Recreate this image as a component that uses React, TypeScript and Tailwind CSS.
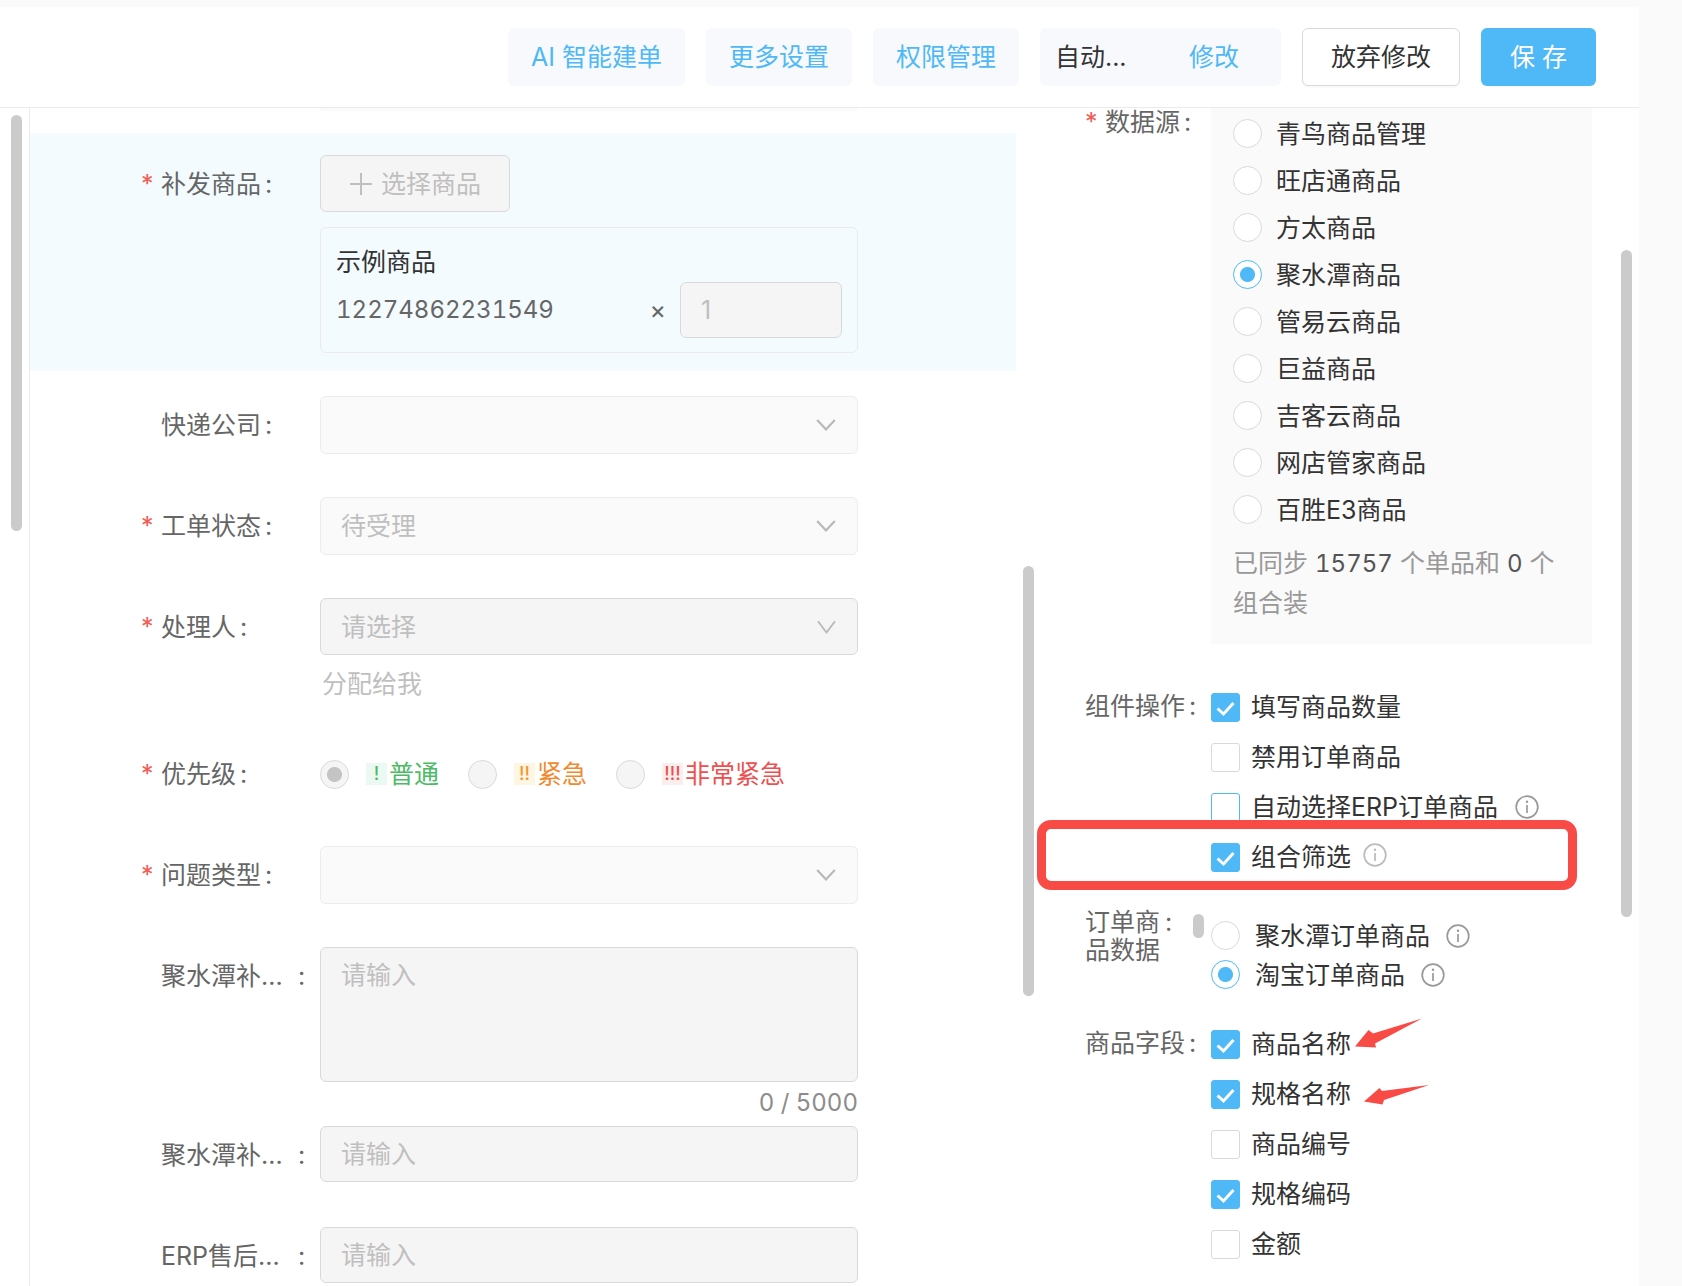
import { useState } from 'react'
import type { ReactNode } from 'react'

const sources = [
  '青鸟商品管理',
  '旺店通商品',
  '方太商品',
  '聚水潭商品',
  '管易云商品',
  '巨益商品',
  '吉客云商品',
  '网店管家商品',
  '百胜E3商品',
]

const headerLink = 'h-[58px] cursor-pointer rounded-md bg-[#f7f9fd] px-[23px] text-[#4fb8f6]'
const fieldBox = 'w-full rounded-md border border-[#d9d9d9] bg-[#f5f5f5] px-5 text-[#bfbfbf] placeholder:text-[#bfbfbf]'

const Thumb = ({ className }: { className: string }) => (
  <div className={`w-[11px] shrink-0 rounded-full bg-[#cbcbcb] ${className}`}></div>
)

const InfoIcon = ({ className }: { className: string }) => (
  <svg viewBox="0 0 24 24" className={`size-6 shrink-0 ${className}`} fill="none" stroke="currentColor" strokeWidth="1.7">
    <circle cx="12" cy="12" r="10.8" />
    <path d="M12 10v8" />
    <circle cx="12" cy="6.8" r="1.2" fill="currentColor" stroke="none" />
  </svg>
)

const Chevron = ({ narrow }: { narrow?: boolean }) => (
  <svg viewBox="0 0 20 14" className="pointer-events-none col-start-1 row-start-1 mr-[22px] h-[14px] w-5 justify-self-end" fill="none" stroke="#b8b8b8" strokeWidth={narrow ? 1.8 : 2.2}>
    <path d={narrow ? 'M2 1.2 10.5 12.5 19 1.2' : 'M1.2 2 10 11.5 18.8 2'} />
  </svg>
)

type RowProps = {
  label: string
  htmlFor?: string
  required?: boolean
  long?: boolean
  children: ReactNode
}

const FormRow = ({ label, htmlFor, required, long, children }: RowProps) => (
  <div className="flex min-h-[58px] items-start">
    <label htmlFor={htmlFor} className="flex h-[58px] w-[290px] shrink-0 items-center pl-[111px] text-[#666]">
      <span className="w-5 shrink-0 text-[#f45b55]">{required ? '*' : ''}</span>
      <span className={long ? 'w-[133px]' : ''}>{label}</span>
      <span className="ml-1">:</span>
    </label>
    <div className="mr-[158px] min-w-0 flex-1">{children}</div>
  </div>
)

const SelectBox = ({ id, text, strong }: { id: string; text: string; strong?: boolean }) => (
  <div className="grid items-center">
    <select
      id={id}
      disabled
      className={
        strong
          ? 'col-start-1 row-start-1 h-[57px] w-full appearance-none rounded-md border border-[#d9d9d9] bg-[#f5f5f5] px-5 text-[#bfbfbf] opacity-100'
          : 'col-start-1 row-start-1 h-[58px] w-full appearance-none rounded-md border border-[#ececec] bg-[#fafafa] px-5 text-[#bfbfbf] opacity-100'
      }
    >
      <option>{text}</option>
    </select>
    <Chevron narrow={strong} />
  </div>
)

const Radio = ({ name, checked, onChange }: { name: string; checked: boolean; onChange: () => void }) => (
  <input
    type="radio"
    name={name}
    checked={checked}
    onChange={onChange}
    className="size-[29px] shrink-0 appearance-none rounded-full border border-[#d9d9d9] bg-white checked:border-[#4fb8f6] checked:bg-[radial-gradient(circle,#4fb8f6_7px,white_8px)]"
  />
)

type CheckProps = { text: string; on?: boolean; focus?: boolean; children?: ReactNode }

const Check = ({ text, on, focus, children }: CheckProps) => {
  const [checked, setChecked] = useState(!!on)
  return (
    <div className="flex h-[50px] items-center">
      <label className="flex items-center">
        <span className="grid">
          <input
            type="checkbox"
            checked={checked}
            onChange={() => setChecked(!checked)}
            className={`col-start-1 row-start-1 size-[29px] appearance-none rounded-[3px] border bg-white checked:border-[#4fb8f6] checked:bg-[#4fb8f6] ${focus ? 'border-[#4fb8f6]' : 'border-[#d9d9d9]'}`}
          />
          {checked && (
            <svg viewBox="0 0 29 29" className="pointer-events-none col-start-1 row-start-1 size-[29px]" fill="none" stroke="white" strokeWidth="3">
              <path d="M6.5 15.5 12.5 21 22.5 10" />
            </svg>
          )}
        </span>
        <span className="ml-[11px]">{text}</span>
      </label>
      {children}
    </div>
  )
}

const Priority = ({ mark, text, checked, badge, color }: { mark: string; text: string; checked?: boolean; badge: string; color: string }) => (
  <label className="flex items-center">
    <input
      type="radio"
      name="priority"
      disabled
      defaultChecked={checked}
      className="size-[29px] shrink-0 appearance-none rounded-full border border-[#d9d9d9] bg-[#f5f5f5] checked:bg-[radial-gradient(circle,#c4c4c4_7px,#f5f5f5_8px)]"
    />
    <span className={`ml-[17px] h-[22px] w-[21px] text-center text-lg/[22px] font-medium ${badge}`}>{mark}</span>
    <span className={`ml-0.5 whitespace-nowrap ${color}`}>{text}</span>
  </label>
)

const Header = () => (
  <header className="flex h-[101px] shrink-0 items-center justify-end gap-[21px] border-b border-[#ebebeb] bg-white pr-[43px]">
    <button className={headerLink}>AI 智能建单</button>
    <button className={headerLink}>更多设置</button>
    <button className={headerLink}>权限管理</button>
    <div className="flex h-[58px] w-[241px] items-center justify-between rounded-md bg-[#f7f9fd] pr-[42px] pl-[15px]">
      <span>自动...</span>
      <button className="cursor-pointer text-[#4fb8f6]">修改</button>
    </div>
    <button className="h-[58px] cursor-pointer rounded-md border border-[#d9d9d9] bg-white px-7 shadow-[0_2px_0_#fafafa]">放弃修改</button>
    <button className="h-[58px] cursor-pointer rounded-md bg-[#4fb8f6] px-[29px] text-white">保 存</button>
  </header>
)

const TicketForm = () => (
  <form className="min-w-0 flex-1 border-l border-[#ebebeb]">
    <div className="mr-[158px] ml-[290px] h-[3px] rounded-b-md bg-[#fafafa]"></div>
    <div className="mt-[22px] bg-[#f3fbff] pt-[22px] pb-[18px]">
      <FormRow label="补发商品" htmlFor="pick" required>
        <button id="pick" type="button" disabled className="flex h-[57px] items-center rounded-md border border-[#d9d9d9] bg-[#f5f5f5] px-7 text-[#bfbfbf]">
          <svg viewBox="0 0 24 24" className="mr-2 size-6" fill="none" stroke="currentColor" strokeWidth="2">
            <path d="M12 1v22M1 12h22" />
          </svg>
          选择商品
        </button>
        <div className="mt-[15px] rounded-md border border-[#ebebeb] px-[15px] pt-4 pb-[14px]">
          <p className="h-[38px]">示例商品</p>
          <div className="flex items-center text-[#666]">
            <span className="text-2xl tabular-nums">12274862231549</span>
            <span className="mr-[14px] ml-auto">×</span>
            <input aria-label="数量" disabled defaultValue="1" className="h-14 w-[162px] rounded-md border border-[#d9d9d9] bg-[#f5f5f5] px-5 text-[#bfbfbf]" />
          </div>
        </div>
      </FormRow>
    </div>
    <div className="mt-[25px] flex flex-col gap-[43px]">
      <FormRow label="快递公司" htmlFor="express">
        <SelectBox id="express" text="" />
      </FormRow>
      <FormRow label="工单状态" htmlFor="status" required>
        <SelectBox id="status" text="待受理" />
      </FormRow>
      <FormRow label="处理人" htmlFor="handler" required>
        <SelectBox id="handler" text="请选择" strong />
        <button type="button" disabled className="mt-[10px] block h-[37px] pl-0.5 text-[#bfbfbf]">分配给我</button>
      </FormRow>
      <FormRow label="优先级" required>
        <div className="flex h-[58px] items-center gap-[29px]">
          <Priority mark="!" text="普通" checked badge="bg-[#ecf9f2] text-[#4dbb66]" color="text-[#4dbb66]" />
          <Priority mark="!!" text="紧急" badge="bg-[#fff5e3] text-[#f2962f]" color="text-[#f2892c]" />
          <Priority mark="!!!" text="非常紧急" badge="bg-[#fdeeee] text-[#ee5050]" color="text-[#ee5050]" />
        </div>
      </FormRow>
      <FormRow label="问题类型" htmlFor="kind" required>
        <SelectBox id="kind" text="" />
      </FormRow>
      <div>
        <FormRow label="聚水潭补..." htmlFor="note" long>
          <textarea id="note" disabled placeholder="请输入" className={`block h-[135px] resize-none py-[9px] ${fieldBox}`}></textarea>
          <p className="h-11 text-right text-2xl/[42px] text-[#8c8c8c] tabular-nums">0 / 5000</p>
        </FormRow>
        <FormRow label="聚水潭补..." htmlFor="after" long>
          <input id="after" disabled placeholder="请输入" className={`h-14 ${fieldBox}`} />
        </FormRow>
      </div>
      <FormRow label="ERP售后..." htmlFor="erp" long>
        <input id="erp" disabled placeholder="请输入" className={`h-14 ${fieldBox}`} />
      </FormRow>
    </div>
  </form>
)

const Settings = () => {
  const [source, setSource] = useState('聚水潭商品')
  const [order, setOrder] = useState('淘宝订单商品')

  return (
    <form className="ml-[51px] w-[507px] shrink-0">
      <div className="flex">
        <div className="flex h-7 w-[126px] shrink-0 items-center text-[#666]">
          <span className="w-5 text-[#f45b55]">*</span>
          <span>数据源</span>
          <span className="ml-1">:</span>
        </div>
        <div className="flex-1 bg-[#fafafa] px-[22px] pt-[2px] pb-[21px]">
          {sources.map((item) => (
            <label key={item} className="flex h-[47px] items-center">
              <Radio name="source" checked={source === item} onChange={() => setSource(item)} />
              <span className="ml-[14px]">{item}</span>
            </label>
          ))}
          <p className="mt-[10px] leading-[40px] text-[#999]">
            已同步 <span className="text-2xl text-[#555] tabular-nums">15757</span> 个单品和 <span className="text-2xl text-[#555] tabular-nums">0</span> 个组合装
          </p>
        </div>
      </div>

      <div className="mt-[38px] flex">
        <div className="flex h-12 w-[126px] shrink-0 items-center text-[#666]">
          <span>组件操作</span>
          <span className="ml-1">:</span>
        </div>
        <div className="relative flex-1">
          <Check text="填写商品数量" on />
          <Check text="禁用订单商品" />
          <Check text="自动选择ERP订单商品" focus>
            <InfoIcon className="ml-[17px] text-[#999]" />
          </Check>
          <Check text="组合筛选" on>
            <InfoIcon className="mb-1 ml-3 text-[#bbb]" />
          </Check>
          <div className="pointer-events-none absolute right-[15px] -bottom-2 -left-[174px] h-[70px] rounded-[14px] border-[9px] border-[#f84b46]"></div>
        </div>
      </div>

      <div className="mt-[26px] flex">
        <div className="flex w-[108px] shrink-0 leading-[28px] text-[#666]">
          <span className="w-[76px]">订单商品数据</span>
          <span className="ml-1">:</span>
        </div>
        <Thumb className="mt-[6px] mr-[7px] h-6" />
        <div className="mt-2 flex-1">
          {['聚水潭订单商品', '淘宝订单商品'].map((item) => (
            <div key={item} className="flex h-[39px] items-center">
              <label className="flex items-center">
                <Radio name="order" checked={order === item} onChange={() => setOrder(item)} />
                <span className="ml-[15px]">{item}</span>
              </label>
              <InfoIcon className="ml-4 text-[#999]" />
            </div>
          ))}
        </div>
      </div>

      <div className="mt-[25px] flex">
        <div className="flex h-12 w-[126px] shrink-0 items-center text-[#666]">
          <span>商品字段</span>
          <span className="ml-1">:</span>
        </div>
        <div className="relative flex-1">
          <Check text="商品名称" on />
          <Check text="规格名称" on />
          <Check text="商品编号" />
          <Check text="规格编码" on />
          <Check text="金额" />
          <svg viewBox="0 0 76 90" className="pointer-events-none absolute top-0 left-[143px] h-[90px] w-[76px]" fill="#f84b46">
            <path d="M1 27.500 14.500 11 19 14.500 68 -0.500 21 24.500 22 28.500Z" />
            <path d="M10 82.500 25.500 69 28 72 75 66 30 81 28.500 85.500Z" />
          </svg>
        </div>
      </div>
    </form>
  )
}

const App = () => {
  return (
    <div className="flex h-screen flex-col overflow-hidden bg-[#fafafa] pt-[7px] pr-[43px] font-['Inter','Noto_Sans_CJK_SC',sans-serif] text-[25px]/[36px] text-[#333]">
      <Header />
      <main className="flex min-h-0 flex-1 overflow-hidden bg-white">
        <div className="w-[29px] shrink-0 pt-[7px] pl-[11px]">
          <Thumb className="h-[416px]" />
        </div>
        <TicketForm />
        <Thumb className="mt-[458px] ml-[7px] h-[430px]" />
        <Settings />
        <Thumb className="mt-[142px] mr-[7px] ml-[29px] h-[667px]" />
      </main>
    </div>
  )
}

export default App
